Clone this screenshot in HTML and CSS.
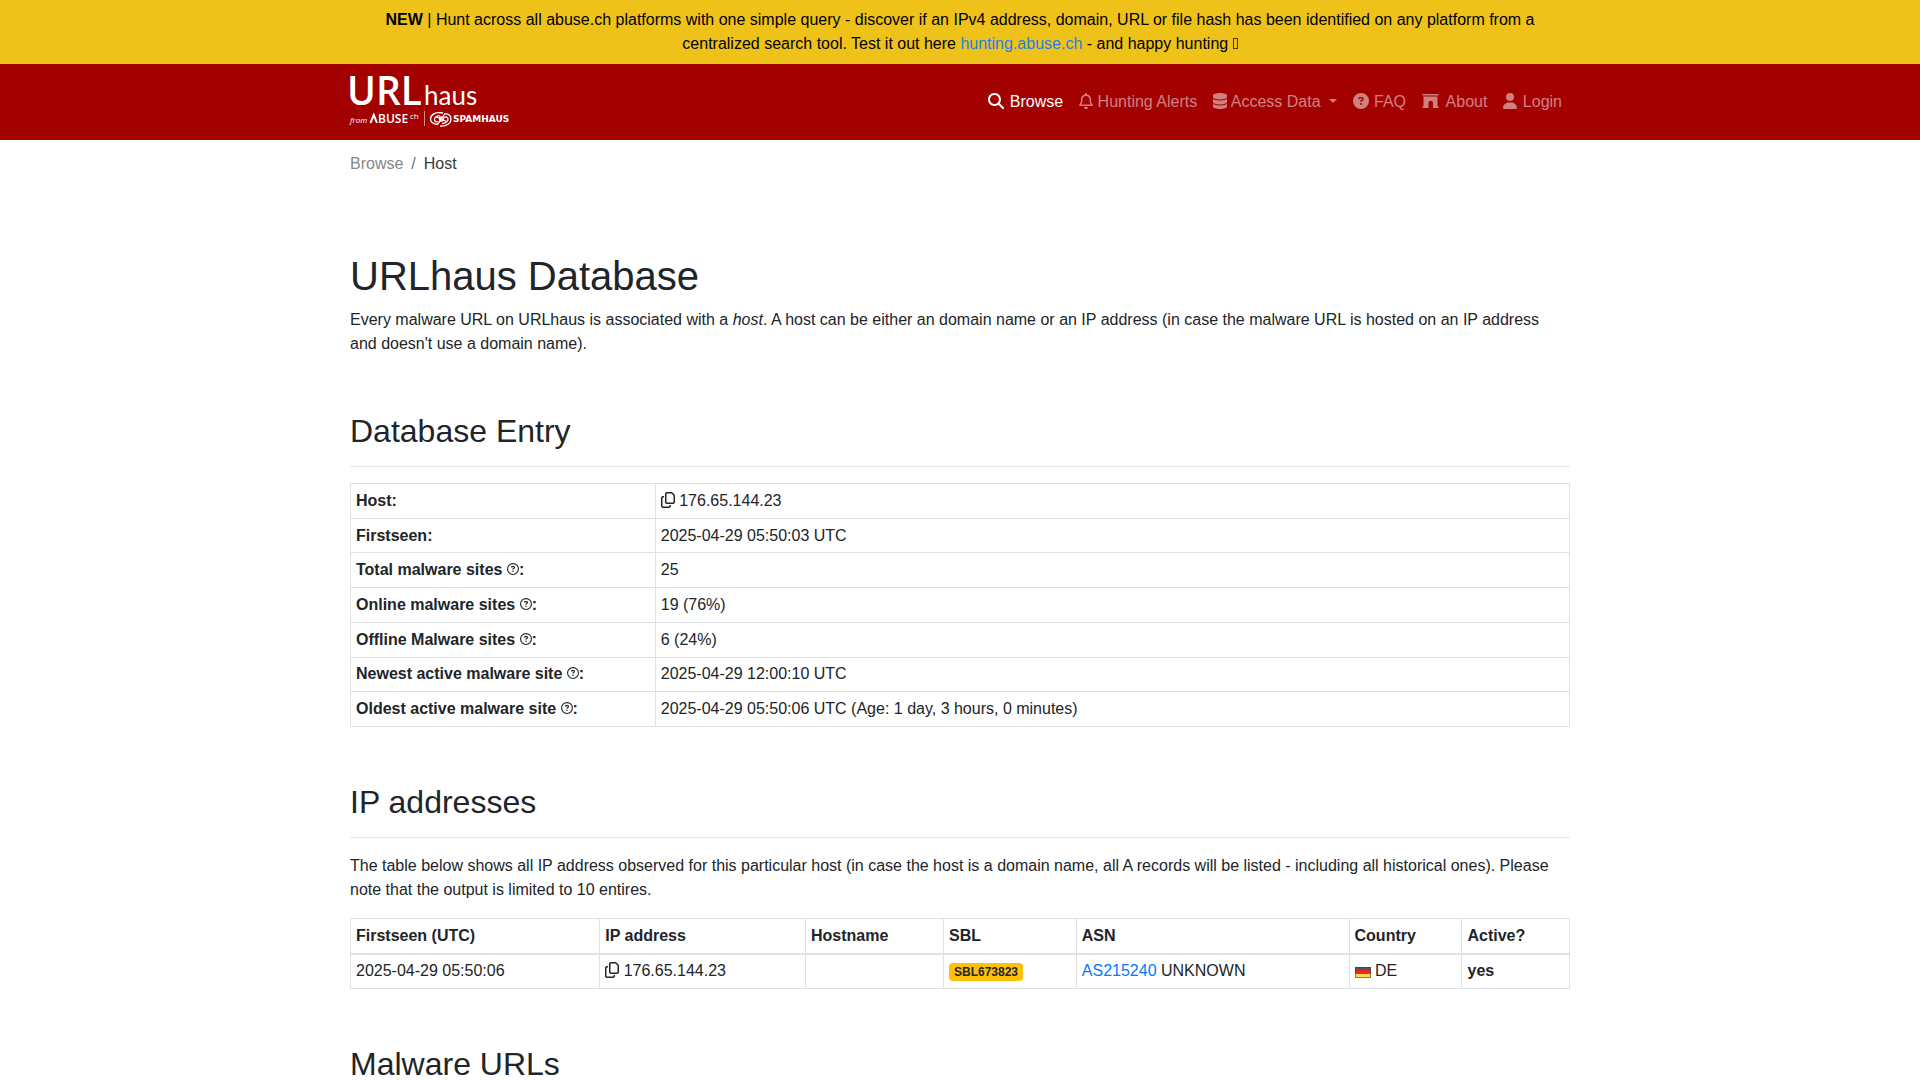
FILE: index.html
```html
<!DOCTYPE html>
<html lang="en">
<head>
  <meta charset="UTF-8">
  <meta name="viewport" content="width=device-width, initial-scale=1">
  <title>URLhaus | Host</title>
  <link rel="stylesheet" href="styles.css">
</head>
<body>
  <svg class="sprite" aria-hidden="true">
    <symbol id="copy" viewBox="0 0 448 512"><path d="M384 336H192c-8.800 0-16-7.200-16-16V64c0-8.800 7.200-16 16-16h140.100L400 115.900V320c0 8.800-7.200 16-16 16zM192 384H384c35.300 0 64-28.700 64-64V115.900c0-12.700-5.100-24.900-14.100-33.900L366.100 14.100c-9-9-21.200-14.100-33.900-14.100H192c-35.300 0-64 28.700-64 64V320c0 35.300 28.700 64 64 64zM64 128c-35.300 0-64 28.700-64 64V448c0 35.300 28.700 64 64 64H256c35.300 0 64-28.700 64-64V416H272v32c0 8.800-7.200 16-16 16H64c-8.800 0-16-7.200-16-16V192c0-8.800 7.200-16 16-16H96V128H64z"/></symbol>
    <symbol id="help" viewBox="0 0 512 512"><path d="M464 256A208 208 0 1 0 48 256a208 208 0 1 0 416 0zM0 256a256 256 0 1 1 512 0A256 256 0 1 1 0 256zm169.800-90.700c7.900-22.300 29.100-37.300 52.800-37.300h58.300c34.900 0 63.100 28.300 63.100 63.100c0 22.600-12.100 43.500-31.700 54.800L280 264.400c-.2 13-10.900 23.600-24 23.600c-13.300 0-24-10.700-24-24V250.500c0-8.600 4.600-16.500 12.100-20.800l44.300-25.400c4.700-2.700 7.600-7.700 7.600-13.100c0-8.400-6.800-15.100-15.100-15.100H222.600c-3.400 0-6.400 2.100-7.500 5.300l-.4 1.200c-4.400 12.500-18.200 19-30.600 14.600s-19-18.200-14.600-30.600l.3-1.300zM224 352a32 32 0 1 1 64 0 32 32 0 1 1-64 0z"/></symbol>
  </svg>

  <div class="banner">
    <div class="container">
      <strong>NEW</strong> | Hunt across all abuse.ch platforms with one simple query - discover if an IPv4 address, domain, URL or file hash has been identified on any platform from a centralized search tool. Test it out here <a href="#">hunting.abuse.ch</a> - and happy hunting <span class="glyph-box"></span>
    </div>
  </div>

  <header class="navbar">
    <div class="container navbar-inner">
      <a class="brand" href="#" aria-label="URLhaus">
        <svg class="logo" width="164" height="52" viewBox="0 0 164 52">
          <text class="logo-url" x="-3" y="29">URL</text>
          <text class="logo-haus" x="74" y="29">haus</text>
          <text class="logo-from" x="0" y="47">from</text>
          <path class="logo-line" d="M20.500 47L23.800 39L27 47"/>
          <text class="logo-abuse" x="28" y="47">BUSE</text>
          <text class="logo-ch" x="60" y="43">ch</text>
          <path class="logo-bar" d="M74.500 35V50"/>
          <g class="logo-swirl">
            <path d="M93 37C85 35.500 80.500 39 80.500 43C80.500 46 83.500 48 88 48.500"/>
            <path d="M90 50C97 50.500 101 47 101 43C101 39.500 99 37.500 94 38"/>
            <path d="M90 40C86.500 39.500 84.500 41.500 84.500 43.500S86.500 46.500 88.500 45.500"/>
            <path d="M92 47.500C96 47.500 98 45 98 43S96 40.500 94 41.500"/>
            <path d="M88 48L94.500 38.500M86.500 41L96.500 45.500"/>
            <circle cx="91.500" cy="43" r="2"/>
          </g>
          <text class="logo-spam" x="103" y="46">SPAMHAUS</text>
        </svg>
      </a>
      <nav>
        <ul class="nav">
          <li><a class="nav-link active" href="#"><svg class="icon icon-16" viewBox="0 0 512 512"><path d="M416 208c0 45.900-14.900 88.300-40 122.700L502.600 457.400c12.500 12.500 12.500 32.800 0 45.300s-32.800 12.500-45.300 0L330.700 376c-34.400 25.200-76.800 40-122.700 40C93.100 416 0 322.900 0 208S93.100 0 208 0S416 93.100 416 208zM208 352a144 144 0 1 0 0-288 144 144 0 1 0 0 288z"/></svg> Browse</a></li>
          <li><a class="nav-link" href="#"><svg class="icon icon-14" viewBox="0 0 448 512"><path d="M224 0c-17.700 0-32 14.300-32 32V49.900C119.500 61.400 64 124.200 64 200v33.400c0 45.400-15.500 89.500-43.800 124.900L5.300 377c-5.800 7.200-6.900 17.100-2.900 25.400S14.800 416 24 416H424c9.200 0 17.600-5.300 21.600-13.600s2.900-18.200-2.900-25.400l-14.900-18.600C399.500 322.900 384 278.800 384 233.400V200c0-75.800-55.500-138.600-128-150.100V32c0-17.700-14.300-32-32-32zm0 96h8c57.400 0 104 46.600 104 104v33.400c0 47.900 13.900 94.600 39.700 134.600H72.300C98.100 328 112 281.300 112 233.400V200c0-57.400 46.600-104 104-104h8zm64 352H160c0 17 6.700 33.300 18.700 45.300s28.300 18.700 45.300 18.700s33.300-6.700 45.300-18.700s18.700-28.300 18.700-45.300z"/></svg> Hunting Alerts</a></li>
          <li><a class="nav-link dropdown" href="#"><svg class="icon icon-14" viewBox="0 0 448 512"><path d="M448 80v48c0 44.200-100.300 80-224 80S0 172.200 0 128V80C0 35.800 100.300 0 224 0S448 35.800 448 80zM393.200 214.700c20.800-7.400 39.900-16.900 54.800-28.600V288c0 44.200-100.300 80-224 80S0 332.200 0 288V186.100c14.900 11.800 34 21.200 54.800 28.600C99.700 230.700 159.500 240 224 240s124.300-9.300 169.200-25.300zM0 346.100c14.900 11.800 34 21.200 54.800 28.600C99.700 390.700 159.500 400 224 400s124.300-9.300 169.200-25.300c20.800-7.400 39.900-16.900 54.800-28.600V432c0 44.200-100.300 80-224 80S0 476.200 0 432V346.100z"/></svg> Access Data</a></li>
          <li><a class="nav-link" href="#"><svg class="icon icon-16" viewBox="0 0 512 512"><path fill-rule="evenodd" d="M256 512A256 256 0 1 0 256 0a256 256 0 1 0 0 512zM169.800 165.300c7.900-22.300 29.100-37.300 52.800-37.300h58.300c34.900 0 63.100 28.300 63.100 63.100c0 22.600-12.100 43.500-31.700 54.800L280 264.400c-.2 13-10.900 23.600-24 23.600c-13.300 0-24-10.700-24-24V250.500c0-8.600 4.600-16.500 12.100-20.800l44.300-25.400c4.700-2.700 7.600-7.700 7.600-13.100c0-8.400-6.800-15.100-15.100-15.100H222.600c-3.400 0-6.400 2.100-7.500 5.300l-.4 1.200c-4.400 12.500-18.200 19-30.600 14.600s-19-18.200-14.600-30.600l.3-1.300zM224 352a32 32 0 1 1 64 0 32 32 0 1 1-64 0z"/></svg> FAQ</a></li>
          <li><a class="nav-link" href="#"><svg class="icon icon-18" viewBox="0 0 576 512"><path d="M16 32H528V80H16zM48 112H496V432H528V480H352V320a64 64 0 0 0-144 0V480H16V432H48z"/></svg> About</a></li>
          <li><a class="nav-link" href="#"><svg class="icon icon-15" viewBox="16 0 448 512"><path d="M224 256A128 128 0 1 0 224 0a128 128 0 1 0 0 256zm-45.700 48C79.800 304 0 383.800 0 482.300C0 498.700 13.300 512 29.700 512H418.300c16.400 0 29.700-13.300 29.700-29.700C448 383.800 368.200 304 269.700 304H178.300z"/></svg> Login</a></li>
        </ul>
      </nav>
    </div>
  </header>

  <main class="container">
    <ol class="breadcrumb">
      <li><a href="#">Browse</a></li>
      <li>Host</li>
    </ol>

    <h1>URLhaus Database</h1>
    <p>Every malware URL on URLhaus is associated with a <em>host</em>. A host can be either an domain name or an IP address (in case the malware URL is hosted on an IP address and doesn't use a domain name).</p>

    <h2>Database Entry</h2>
    <hr>
    <table class="table entry">
      <tr><th>Host:</th><td><svg class="icon icon-14"><use href="#copy"/></svg> 176.65.144.23</td></tr>
      <tr><th>Firstseen:</th><td>2025-04-29 05:50:03 UTC</td></tr>
      <tr><th>Total malware sites <svg class="help"><use href="#help"/></svg>:</th><td>25</td></tr>
      <tr><th>Online malware sites <svg class="help"><use href="#help"/></svg>:</th><td>19 (76%)</td></tr>
      <tr><th>Offline Malware sites <svg class="help"><use href="#help"/></svg>:</th><td>6 (24%)</td></tr>
      <tr><th>Newest active malware site <svg class="help"><use href="#help"/></svg>:</th><td>2025-04-29 12:00:10 UTC</td></tr>
      <tr><th>Oldest active malware site <svg class="help"><use href="#help"/></svg>:</th><td>2025-04-29 05:50:06 UTC (Age: 1 day, 3 hours, 0 minutes)</td></tr>
    </table>

    <h2>IP addresses</h2>
    <hr>
    <p>The table below shows all IP address observed for this particular host (in case the host is a domain name, all A records will be listed - including all historical ones). Please note that the output is limited to 10 entires.</p>
    <table class="table">
      <thead>
        <tr><th>Firstseen (UTC)</th><th>IP address</th><th>Hostname</th><th>SBL</th><th>ASN</th><th>Country</th><th>Active?</th></tr>
      </thead>
      <tbody>
        <tr>
          <td>2025-04-29 05:50:06</td>
          <td><svg class="icon icon-14"><use href="#copy"/></svg> 176.65.144.23</td>
          <td></td>
          <td><a class="badge" href="#">SBL673823</a></td>
          <td><a href="#">AS215240</a> UNKNOWN</td>
          <td><span class="flag"></span> DE</td>
          <td><strong>yes</strong></td>
        </tr>
      </tbody>
    </table>

    <h2>Malware URLs</h2>
    <hr>
  </main>
</body>
</html>
```
FILE: styles.css
```css
* {
  box-sizing: border-box;
}
html {
  overflow-x: hidden;
  scrollbar-width: none;
}
body {
  margin: 0;
  background-color: #fff;
  color: #212529;
  font-family: "Liberation Sans", Arial, sans-serif;
  font-size: 16px;
  line-height: 24px;
}
a {
  color: #007bff;
  text-decoration: none;
}
.sprite {
  display: none;
}
.container {
  max-width: 1250px;
  margin: 0 auto;
  padding: 0 15px;
}

.banner {
  padding: 8px 0;
  background-color: #efc219;
  color: #000;
  text-align: center;
}
.banner a {
  color: #1a82e8;
}
.glyph-box {
  display: inline-block;
  width: 5px;
  height: 11px;
  border: 1px solid rgba(0, 0, 0, 0.7);
}

.navbar {
  padding: 8px 0;
  background-color: #a30000;
}
.navbar-inner {
  display: flex;
  align-items: center;
  justify-content: space-between;
}
.brand {
  display: block;
  padding: 4px 0;
}
.logo {
  display: block;
  overflow: visible;
  fill: #fff;
  font-family: "Open Sans", sans-serif;
}
.logo-url {
  font-size: 39px;
  font-weight: 600;
}
.logo-haus {
  font-family: Lato, sans-serif;
  font-size: 26px;
}
.logo-from {
  font-size: 8px;
  font-style: italic;
}
.logo-abuse {
  font-size: 12px;
  font-weight: 600;
}
.logo-ch {
  font-size: 8px;
}
.logo-spam {
  font-family: "DejaVu Sans", sans-serif;
  font-size: 9px;
  font-weight: 700;
}
.logo-line {
  fill: none;
  stroke: #fff;
  stroke-width: 2;
}
.logo-bar {
  stroke: #d98c8c;
}
.logo-swirl {
  fill: none;
  stroke: #fff;
  stroke-width: 1.3;
}
.nav {
  display: flex;
  margin: 0;
  padding: 0;
  list-style: none;
}
.nav-link {
  display: block;
  padding: 8px;
  color: rgba(255, 255, 255, 0.5);
}
.nav-link.active {
  color: #fff;
}
.nav-link .icon-16 {
  margin-right: 1px;
}
.nav-link .icon-18 {
  margin-right: 2px;
}
.dropdown::after {
  content: "";
  display: inline-block;
  margin-left: 8px;
  vertical-align: 4px;
  border-top: 4px solid;
  border-right: 4px solid transparent;
  border-left: 4px solid transparent;
}

.icon {
  height: 16px;
  fill: currentColor;
  vertical-align: -2px;
}
.icon-14 {
  width: 14px;
}
.icon-15 {
  width: 15px;
}
.icon-16 {
  width: 16px;
}
.icon-18 {
  width: 18px;
}
.help {
  width: 12px;
  height: 12px;
  fill: currentColor;
}

.breadcrumb {
  display: flex;
  margin: 0 0 64px;
  padding: 12px 0;
  list-style: none;
  color: #343a40;
}
.breadcrumb a {
  color: #868686;
}
.breadcrumb li + li::before {
  content: "/";
  padding: 0 8px;
  color: #6c757d;
}

h1, h2 {
  font-weight: 500;
}
h1 {
  margin: 0 0 8px;
  font-size: 40px;
  line-height: 48px;
}
h2 {
  margin: 56px 0 8px;
  font-size: 32px;
  line-height: 38px;
}
p {
  margin: 0 0 16px;
}
hr {
  margin: 16px 0;
  border: 0;
  border-top: 1px solid #e5e5e5;
}

.table {
  width: 100%;
  margin-bottom: 16px;
  border-collapse: collapse;
}
.table th, .table td {
  padding: 5px;
  border: 1px solid #dee2e6;
  text-align: left;
  vertical-align: top;
}
.table td {
  padding-top: 4px;
}
.table thead th {
  border-bottom-width: 2px;
}
.entry {
  height: 244px;
}
.entry th, .entry td {
  padding: 4px 5px;
  vertical-align: middle;
}
.entry th {
  width: 25%;
}

.badge {
  display: inline-block;
  padding: 3px 5px;
  border-radius: 4px;
  background-color: #ffc107;
  color: #212529;
  font-size: 12px;
  font-weight: 700;
  line-height: 12px;
  vertical-align: baseline;
}
.flag {
  display: inline-block;
  width: 16px;
  height: 11px;
  border: 1px solid rgba(80, 60, 20, 0.6);
  background: linear-gradient(#555 30%, #e02828 30%, #e83030 66%, #ffd84a 66%);
  background-origin: border-box;
  vertical-align: -2px;
}
```
